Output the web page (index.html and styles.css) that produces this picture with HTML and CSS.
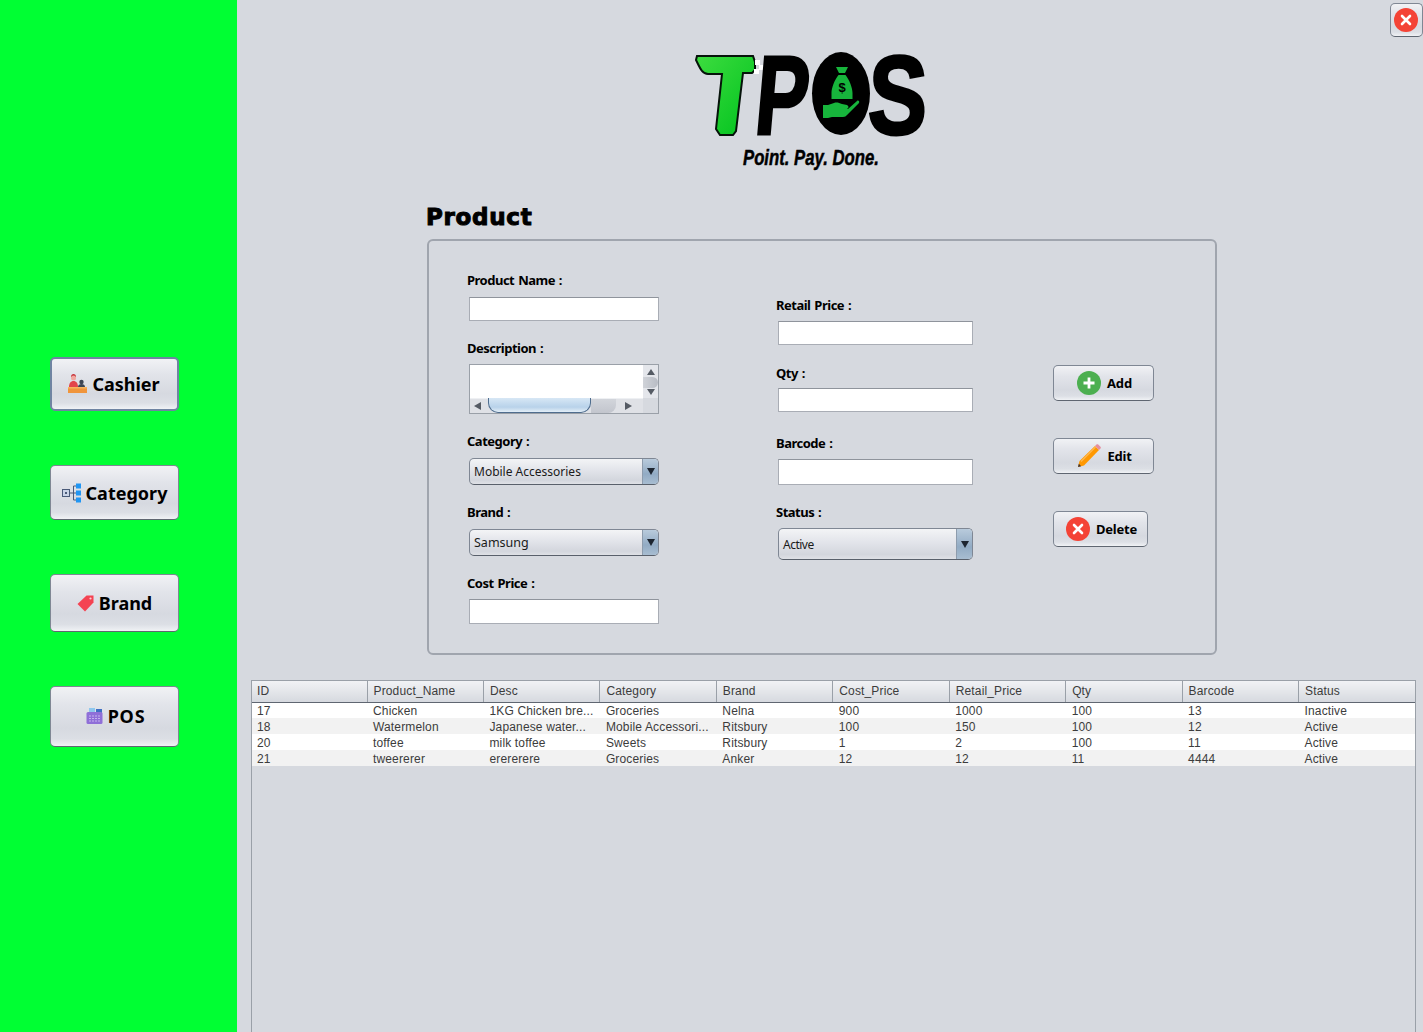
FILE: index.html
```html
<!DOCTYPE html>
<html lang="en">
<head>
  <meta charset="UTF-8">
  <title>TPOS - Product</title>
  <link rel="stylesheet" href="styles.css">
</head>
<body>
  <div class="app">
    <!-- left menu -->
    <nav class="sidebar">
      <button class="btn menu-btn focused h54">
        <svg class="icon" width="20" height="20" viewBox="0 0 20 20">
          <path d="M3 3c0-2 1-3 2.500-3S8 1 8 3z" fill="#c62f36"/>
          <circle cx="5.500" cy="4" r="2.500" fill="#f0a8a0"/>
          <path d="M1 13c0-4 2-6 4.500-6S10 9 10 13z" fill="#e2444a"/>
          <circle cx="13.500" cy="8" r="2.200" fill="#3c4654"/>
          <path d="M10 13c0-2 1.500-3 3.500-3s3.500 1 3.500 3z" fill="#3c4654"/>
          <rect x="0" y="13" width="19" height="6" fill="#f0953c"/>
          <rect x="0" y="13" width="19" height="1.500" fill="#f7b45e"/>
        </svg>
        Cashier
      </button>
      <button class="btn menu-btn h55 tight">
        <svg class="icon" width="20" height="20" viewBox="0 0 20 20" fill="none">
          <rect x="0.500" y="6.500" width="7" height="7" fill="#c9d3e6" stroke="#4a5a78"/>
          <rect x="3" y="9" width="2" height="2" fill="#4a5a78"/>
          <path d="M8 10h3.500M11.500 3v14M11.500 3H14M11.500 10H14M11.500 17H14" stroke="#4a5a78"/>
          <rect x="14" y="0.500" width="5" height="5" fill="#2196f3"/>
          <rect x="14" y="7.500" width="5" height="5" fill="#2196f3"/>
          <rect x="14" y="14.500" width="5" height="5" fill="#2196f3"/>
        </svg>
        Category
      </button>
      <button class="btn menu-btn h58">
        <svg class="icon" width="17" height="17" viewBox="0 0 17 17">
          <path d="M9.500 0.500H16.500V7.500L8 16.500 0.500 9z" fill="#f44352"/>
          <circle cx="13.500" cy="3.500" r="1.100" fill="#fbd0d4"/>
        </svg>
        Brand
      </button>
      <button class="btn menu-btn h61 pos">
        <svg class="icon" width="17" height="16" viewBox="0 0 17 16">
          <rect x="3" y="0" width="6" height="5" fill="#8fc7ee"/>
          <rect x="10" y="1" width="6" height="4" fill="#3f6fc4"/>
          <rect x="0.500" y="4" width="16" height="12" rx="1.500" fill="#8f6fd8"/>
          <path d="M3 8h11M3 10.500h11M3 13h11" stroke="#c5b4ee" stroke-dasharray="2 1"/>
        </svg>
        POS
      </button>
    </nav>

    <main class="content">
      <div class="top">
        <svg class="logo" width="260" height="142" viewBox="694 30 260 142" role="img" aria-label="TPOS logo">
          <defs>
            <linearGradient id="tGreen" x1="0" y1="0" x2="1" y2="1">
              <stop offset="0" stop-color="#3ddc3f"/>
              <stop offset="1" stop-color="#00c21e"/>
            </linearGradient>
          </defs>
          <!-- T -->
          <path d="M697 56H753L755 62V70L752 73H743L736 131 733 135H720L716 129 722 74H708C702 74 700 68 696 60z" fill="url(#tGreen)" stroke="#06130a" stroke-width="2"/>
          <rect x="755" y="60" width="5" height="5" fill="#fff"/>
          <rect x="759" y="65" width="4" height="5" fill="#fff"/>
          <rect x="754" y="69" width="5" height="5" fill="#fff"/>
          <!-- P, O, S -->
          <g transform="translate(753 134) skewX(-5)">
            <text class="logo-big" x="0" y="0" textLength="53" lengthAdjust="spacingAndGlyphs">P</text>
          </g>
          <ellipse cx="841" cy="93.500" rx="29" ry="41.500" fill="#000"/>
          <path d="M836 67h12l-3 6h-6zM838.500 75h7c4 5 7 13 7 18v6h-21v-6c0-5 3-13 7-18z" fill="#17b53c"/>
          <text class="logo-dollar" x="842" y="92" text-anchor="middle">$</text>
          <path d="M823 105h5l6-2c3-1 5 0 8 1l5 1c2 1 2 3 0 4h-7l8 0 9-8c1-1 3 0 2 2l-12 12c-1 1-2 2-4 2h-11l-4 1h-5z" fill="#17b53c"/>
          <g transform="translate(867 134) skewX(-2)">
            <text class="logo-big" x="0" y="0" textLength="59" lengthAdjust="spacingAndGlyphs">S</text>
          </g>
          <text class="logo-tag" x="743" y="165" textLength="136" lengthAdjust="spacingAndGlyphs">Point. Pay. Done.</text>
        </svg>
        <button class="btn close-btn" aria-label="Close">
          <svg width="24" height="24" viewBox="0 0 24 24">
            <circle cx="12" cy="12" r="12" fill="#f44336"/>
            <path d="M8 8l8 8M16 8l-8 8" stroke="#fff" stroke-width="2.600" stroke-linecap="round"/>
          </svg>
        </button>
      </div>

      <h1 class="page-title">Product</h1>

      <section class="panel">
        <div class="col">
          <label class="lbl">Product Name :</label>
          <input class="txt w190" type="text">

          <label class="lbl tight-lbl">Description :</label>
          <div class="scrollpane">
            <div class="scroll-view"></div>
            <div class="vbar">
              <span class="arrow up"></span>
              <span class="vthumb"></span>
              <span class="arrow down"></span>
            </div>
            <div class="hbar">
              <span class="arrow left"></span>
              <span class="hthumb"></span>
              <span class="htrack"></span>
              <span class="arrow right"></span>
            </div>
            <div class="corner"></div>
          </div>

          <label class="lbl">Category :</label>
          <div class="combo w190 h27 small"><span class="combo-text">Mobile Accessories</span><span class="combo-arrow"></span></div>

          <label class="lbl">Brand :</label>
          <div class="combo w190 h27"><span class="combo-text">Samsung</span><span class="combo-arrow"></span></div>

          <label class="lbl tight-lbl">Cost Price :</label>
          <input class="txt w190 h25" type="text">
        </div>

        <div class="col col-mid">
          <label class="lbl">Retail Price :</label>
          <input class="txt w195" type="text">

          <label class="lbl qty-lbl">Qty :</label>
          <input class="txt w195" type="text">

          <label class="lbl wide-gap">Barcode :</label>
          <input class="txt w195 h26" type="text">

          <label class="lbl">Status :</label>
          <div class="combo w195 h32 small narrow"><span class="combo-text">Active</span><span class="combo-arrow"></span></div>
        </div>

        <div class="actions">
          <button class="btn act-btn w101">
            <svg width="24" height="24" viewBox="0 0 24 24">
              <circle cx="12" cy="12" r="12" fill="#4caf50"/>
              <path d="M12 6.500v11M6.500 12h11" stroke="#fff" stroke-width="2.800"/>
            </svg>
            Add
          </button>
          <button class="btn act-btn w101">
            <svg width="24" height="24" viewBox="0 0 24 24">
              <path d="M1 23l1.500-6L18 2l4 4L7 21.500z" fill="#ff9800"/>
              <path d="M18 2l1.500-1.500c.5-.5 1.200-.5 1.700 0l2.300 2.300c.5.500.5 1.200 0 1.700L22 6z" fill="#e58fa0"/>
              <path d="M1 23l.8-3.200 2.400 2.400z" fill="#37323a"/>
              <path d="M4 17.500L18.500 3" stroke="#ffb74d" stroke-width="1.500"/>
            </svg>
            Edit
          </button>
          <button class="btn act-btn w95">
            <svg width="24" height="24" viewBox="0 0 24 24">
              <circle cx="12" cy="12" r="12" fill="#f44336"/>
              <path d="M8 8l8 8M16 8l-8 8" stroke="#fff" stroke-width="2.600" stroke-linecap="round"/>
            </svg>
            Delete
          </button>
        </div>
      </section>

      <div class="table-wrap">
        <table class="grid">
          <thead>
            <tr><th class="id-col">ID</th><th>Product_Name</th><th>Desc</th><th>Category</th><th>Brand</th><th>Cost_Price</th><th>Retail_Price</th><th>Qty</th><th>Barcode</th><th>Status</th></tr>
          </thead>
          <tbody>
            <tr><td>17</td><td>Chicken</td><td>1KG Chicken bre...</td><td>Groceries</td><td>Nelna</td><td>900</td><td>1000</td><td>100</td><td>13</td><td>Inactive</td></tr>
            <tr><td>18</td><td>Watermelon</td><td>Japanese water...</td><td>Mobile Accessori...</td><td>Ritsbury</td><td>100</td><td>150</td><td>100</td><td>12</td><td>Active</td></tr>
            <tr><td>20</td><td>toffee</td><td>milk toffee</td><td>Sweets</td><td>Ritsbury</td><td>1</td><td>2</td><td>100</td><td>11</td><td>Active</td></tr>
            <tr><td>21</td><td>tweererer</td><td>erererere</td><td>Groceries</td><td>Anker</td><td>12</td><td>12</td><td>11</td><td>4444</td><td>Active</td></tr>
          </tbody>
        </table>
      </div>
    </main>
  </div>
</body>
</html>
```

FILE: styles.css
```css
* {
  box-sizing: border-box;
}
html, body {
  margin: 0;
  height: 100%;
  overflow: hidden;
}
body {
  font-family: "Noto Sans", Arial, sans-serif;
  background-color: #d6d9df;
  color: #000;
}
.app {
  display: flex;
  height: 100vh;
}

/* sidebar */
.sidebar {
  width: 237px;
  flex: none;
  background-color: #00ff33;
  display: flex;
  flex-direction: column;
  align-items: flex-start;
  gap: 54px;
  padding: 357px 0 0 50px;
}

/* shared raised button look */
.btn {
  display: flex;
  align-items: center;
  justify-content: center;
  padding: 0;
  border: 1px solid #7f8794;
  border-bottom-color: #5f6671;
  border-radius: 5px;
  background: linear-gradient(#f1f2f5, #e2e4ea 30%, #d6d9e0 70%, #dcdfe5 88%, #f0f2f5);
  font-family: "Noto Sans", Arial, sans-serif;
  font-weight: 700;
  color: #000;
}
.menu-btn {
  width: 129px;
  font-size: 18px;
  gap: 5px;
}
.menu-btn.tight {
  gap: 4px;
}
.menu-btn.focused {
  border: 2px solid #6f84a2;
  gap: 4px;
  padding-right: 1px;
}
.menu-btn.pos {
  letter-spacing: 0.8px;
  padding: 0 0 1px 2px;
}
.h54 { height: 54px; }
.h55 { height: 55px; }
.h58 { height: 58px; }
.h61 { height: 61px; }

/* main area */
.content {
  flex: 1;
  min-width: 0;
  display: flex;
  flex-direction: column;
}
.top {
  display: flex;
  align-items: flex-start;
}
.logo {
  margin: 30px 0 0 457px;
}
.logo-big {
  font-family: "Liberation Sans", Arial, sans-serif;
  font-weight: 700;
  font-size: 112px;
  fill: #000;
  stroke: #000;
  stroke-width: 3px;
}
.logo-dollar {
  font-family: "Liberation Sans", Arial, sans-serif;
  font-weight: 700;
  font-size: 13px;
  fill: #000;
}
.logo-tag {
  font-family: "Liberation Sans", Arial, sans-serif;
  font-weight: 700;
  font-style: italic;
  font-size: 22px;
  fill: #000;
  stroke: #000;
  stroke-width: 0.5px;
}
.close-btn {
  width: 33px;
  height: 34px;
  margin: 3px 0 0 auto;
  padding-right: 2px;
}

.page-title {
  margin: 32px 0 9px 189px;
  font-family: "DejaVu Sans", Arial, sans-serif;
  font-size: 23px;
  line-height: 26px;
  font-weight: 700;
  letter-spacing: 0.7px;
  -webkit-text-stroke: 1px #000;
}

/* form panel */
.panel {
  width: 790px;
  height: 416px;
  margin-left: 190px;
  border: 2px solid #a0a5ae;
  border-radius: 6px;
  padding: 31px 0 0 38px;
  display: grid;
  grid-template-columns: 309px 277px auto;
  align-items: start;
}
.col {
  display: flex;
  flex-direction: column;
  align-items: flex-start;
}
.col-mid {
  padding-top: 25px;
}
.lbl {
  height: 16px;
  line-height: 16px;
  font-size: 13px;
  font-weight: 700;
  letter-spacing: -0.5px;
  word-spacing: 1px;
  margin-bottom: 9px;
}
.col > * + .lbl {
  margin-top: 19px;
}
.lbl.tight-lbl,
.col-mid > .lbl {
  margin-bottom: 8px;
}
.col-mid > .lbl.qty-lbl {
  margin-top: 20px;
  margin-bottom: 7px;
}
.col-mid > .lbl.wide-gap {
  margin-top: 23px;
}
.txt {
  display: block;
  height: 24px;
  margin: 0 0 0 2px;
  padding: 0 4px;
  background: #fff;
  border: 1px solid #a9adb5;
  border-top-color: #8f949c;
  border-radius: 0;
}
.w190 { width: 190px; }
.w195 { width: 195px; }
.h25 { height: 25px; }
.h26 { height: 26px; }

/* description box with its two scroll bars */
.scrollpane {
  width: 190px;
  height: 50px;
  margin-left: 2px;
  border: 1px solid #9aa0a8;
  display: grid;
  grid-template-columns: 1fr 15px;
  grid-template-rows: 1fr 15px;
  background: #d6d9df;
}
.scroll-view {
  background: #fff;
}
.vbar {
  display: flex;
  flex-direction: column;
  align-items: center;
  justify-content: space-between;
  padding: 4px 0 3px;
  background: #e4e6eb;
}
.vthumb {
  width: 15px;
  height: 11px;
  border-radius: 0 6px 6px 0;
  background: linear-gradient(90deg, #d0d3d9, #b8bcc4);
}
.hbar {
  display: flex;
  align-items: center;
  padding-left: 4px;
  background: #dfe1e6;
  border-top: 1px solid #eef0f3;
}
.hthumb {
  width: 103px;
  height: 15px;
  margin: -1px 0 0 7px;
  border: 1px solid #4f6d8e;
  border-top: 0;
  border-radius: 0 0 10px 10px;
  background: linear-gradient(#d7e7f5, #b8d2ea 65%, #e3eef7);
}
.htrack {
  width: 25px;
  height: 14px;
  margin-right: 9px;
  border-radius: 0 0 8px 0;
  background: linear-gradient(#d2d5db, #c2c5cd);
}
.corner {
  background: #d6d9df;
}
.arrow {
  width: 0;
  height: 0;
  border-style: solid;
  border-color: transparent;
}
.arrow.up { border-width: 0 4px 6px; border-bottom-color: #555b64; }
.arrow.down { border-width: 6px 4px 0; border-top-color: #555b64; }
.arrow.left { border-width: 4px 7px 4px 0; border-right-color: #555b64; }
.arrow.right { border-width: 4px 0 4px 7px; border-left-color: #555b64; }

/* combo boxes */
.combo {
  display: flex;
  margin-left: 2px;
  border: 1px solid #7f8794;
  border-bottom-color: #59606b;
  border-radius: 5px;
  overflow: hidden;
  background: linear-gradient(#f3f4f6, #e2e4ea 45%, #d3d6dd 85%, #dfe1e6);
  font-size: 12.5px;
  color: #1a1a1a;
}
.combo.small {
  font-size: 12px;
}
.combo.narrow {
  letter-spacing: -0.5px;
}
.h27 { height: 27px; }
.h32 { height: 32px; }
.combo-text {
  flex: 1;
  padding-left: 4px;
  align-self: center;
}
.combo-arrow {
  width: 16px;
  display: flex;
  align-items: center;
  justify-content: center;
  background: linear-gradient(#b9cbdc, #92abc4 60%, #a8bdd1);
  border-left: 1px solid #8d9cad;
}
.combo-arrow::after {
  content: "";
  border-style: solid;
  border-width: 7px 4px 0;
  border-color: #1d2530 transparent transparent;
}

/* add / edit / delete */
.actions {
  display: flex;
  flex-direction: column;
  align-items: flex-start;
  gap: 37px;
  margin-top: 93px;
}
.act-btn {
  height: 36px;
  padding-left: 2px;
  font-size: 13px;
  letter-spacing: -0.2px;
  gap: 6px;
}
.w101 { width: 101px; }
.w95 { width: 95px; }

/* product table */
.table-wrap {
  flex: 1;
  min-height: 0;
  margin: 25px 7px 0 14px;
  border: 1px solid #9aa0a8;
  border-bottom: 0;
}
.grid {
  width: 100%;
  table-layout: fixed;
  border-collapse: collapse;
  font-family: "Liberation Sans", Arial, sans-serif;
  font-size: 12px;
  letter-spacing: 0.15px;
  color: #3c3c3c;
}
.grid th {
  height: 21px;
  padding: 0 0 0 6px;
  text-align: left;
  font-weight: 400;
  background: linear-gradient(#f1f2f5, #e4e6ea 50%, #d6d9df);
  border-right: 1px solid #9aa0a8;
  border-bottom: 1px solid #5f6671;
}
.grid th.id-col {
  width: 115px;
  padding-left: 5px;
}
.grid th:last-child {
  border-right: 0;
}
.grid td {
  height: 16px;
  padding: 1px 0 0 6px;
  background: #fff;
  white-space: nowrap;
  overflow: hidden;
}
.grid td:first-child {
  padding-left: 5px;
}
.grid tbody tr:nth-child(even) td {
  background: #f2f2f2;
}
```
